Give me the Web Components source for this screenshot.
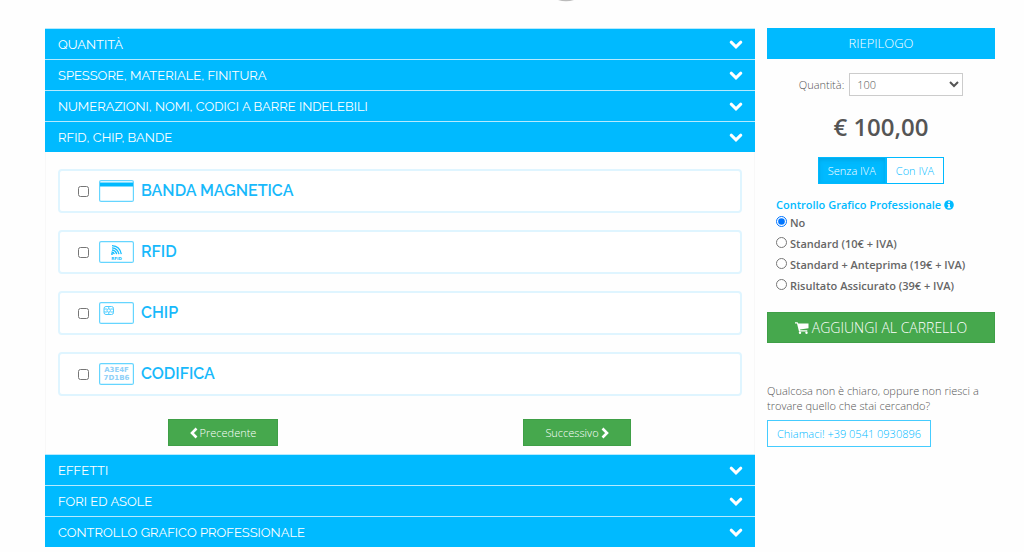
<!DOCTYPE html>
<html lang="it">
<head>
<meta charset="utf-8">
<meta name="viewport" content="width=device-width, initial-scale=1">
<title>Configuratore tessere</title>
<style>
  :root { --sky: #00baff; --sky-pale: #dff5ff; --green: #46a84d; --text: #555; }
  body { margin: 0; background: #fefefe; color: var(--text); font: 300 12px/15px "Open Sans", "Noto Sans", sans-serif; }
</style>
</head>
<body>
<card-configurator></card-configurator>

<template id="t-configurator">
  <style>
    :host { display: block; }
    header { height: 28px; }
    header svg { display: block; margin-left: 54%; }
    .layout { display: grid; grid-template-columns: minmax(0, 1fr) 228px; gap: 12px; align-items: start; padding: 0 29px 4px 45px; }
    .panel { border: solid #f8f8f8; border-width: 0 1px; padding: 17px 12px 8px; }
    .options { display: grid; gap: 17px; }
    nav { display: grid; grid-template-columns: 1fr 1fr; justify-items: center; margin: 23px -12px 0; }
  </style>
  <header><svg width="28" height="3" viewBox="0 0 28 3" aria-hidden="true"><path d="M5 0Q13 2.6 21 0Z" fill="#bbb"/></svg></header>
  <div class="layout">
    <main>
      <step-header>QUANTITÀ</step-header>
      <step-header>SPESSORE, MATERIALE, FINITURA</step-header>
      <step-header>NUMERAZIONI, NOMI, CODICI A BARRE INDELEBILI</step-header>
      <step-header>RFID, CHIP, BANDE</step-header>
      <div class="panel">
        <div class="options">
          <card-option label="BANDA MAGNETICA">
            <svg width="35" height="22" viewBox="0 0 35 22" aria-hidden="true"><rect x=".6" y=".6" width="33.8" height="20.8" rx="1.5" fill="#fff" stroke="#65d5ff" stroke-width="1.2"/><path d="M1 2.5h33v4H1z" fill="#00baff"/></svg>
          </card-option>
          <card-option label="RFID">
            <svg width="35" height="22" viewBox="0 0 35 22" aria-hidden="true"><rect x=".6" y=".6" width="33.8" height="20.8" rx="1.5" fill="#fff" stroke="#65d5ff" stroke-width="1.2"/><g fill="none" stroke="#18beff" stroke-width="1.3"><path d="M13 4.6Q21 5 22.3 13.2M13 6.8Q18.8 7.200 20 13.200M13 9Q16.800 9.400 17.700 13.200M12.500 11Q14.800 11.200 15.300 13.200"/></g><circle cx="13" cy="13" r="1" fill="#18beff"/><text x="17.500" y="18.500" text-anchor="middle" font-family="DejaVu Sans" font-weight="700" font-size="4" fill="#18beff">RFID</text></svg>
          </card-option>
          <card-option label="CHIP">
            <svg width="35" height="22" viewBox="0 0 35 22" aria-hidden="true"><rect x=".6" y=".6" width="33.8" height="20.8" rx="1.5" fill="#fff" stroke="#65d5ff" stroke-width="1.2"/><g fill="none" stroke="#4fcdff" stroke-width="1"><rect x="5" y="4.500" width="9.500" height="8" rx="2"/><circle cx="9.750" cy="8.500" r="1.700"/><path d="M5 7h3M5 10h3M11.500 7h3M11.500 10h3M9.750 4.500v2.300M9.750 10.200v2.300"/></g></svg>
          </card-option>
          <card-option label="CODIFICA">
            <svg width="35" height="22" viewBox="0 0 35 22" aria-hidden="true"><rect x=".6" y=".6" width="33.8" height="20.8" rx="1.5" fill="#fff" stroke="#65d5ff" stroke-width="1.2"/><g font-family="DejaVu Sans" font-weight="700" font-size="7" fill="#8fd0f8" text-anchor="middle"><text x="17.500" y="9">A3E4F</text><text x="17.500" y="17">7D1B6</text></g></svg>
          </card-option>
        </div>
        <nav>
          <nav-button dir-icon="prev">Precedente</nav-button>
          <nav-button dir-icon="next">Successivo</nav-button>
        </nav>
      </div>
      <step-header>EFFETTI</step-header>
      <step-header>FORI ED ASOLE</step-header>
      <step-header>CONTROLLO GRAFICO PROFESSIONALE</step-header>
    </main>
    <order-summary></order-summary>
  </div>
</template>

<template id="t-step">
  <style>
    :host { display: block; border-top: 1px solid #b5eaff; }
    button { display: flex; align-items: center; justify-content: space-between; width: 100%; height: 30px; margin: 0; padding: 2px 12px 0 13px; border: 0; border-radius: 0; background: var(--sky); color: #fff; font: 400 13px/20px Raleway, Lato, sans-serif; text-align: left; cursor: pointer; }
    svg { flex: none; }
  </style>
  <button type="button"><span><slot></slot></span><svg width="14" height="10" viewBox="0 0 14 10" aria-hidden="true"><path d="M2.200 2.200l4.800 4.600 4.800-4.600" fill="none" stroke="#fff" stroke-width="3" stroke-linecap="round"/></svg></button>
</template>

<template id="t-option">
  <style>
    :host { display: block; }
    label { display: flex; align-items: center; box-sizing: border-box; height: 44px; padding: 0 18px; border: 2px solid var(--sky-pale); border-radius: 4px; background: #fff; color: #18b9fb; font: 600 16px/20px Raleway, "Open Sans", sans-serif; cursor: pointer; }
    input { width: 11px; height: 11px; margin: 0 10px 0 0; flex: none; }
    .icon { display: flex; margin-right: 7px; }
  </style>
  <label><input type="checkbox"><span class="icon"><slot></slot></span><span class="name"></span></label>
</template>

<template id="t-nav">
  <style>
    :host { display: block; }
    button { display: flex; align-items: center; gap: 2px; height: 27px; margin: 0; padding: 0 21px; border: 1px solid #3f9f47; border-radius: 0; background: var(--green); color: #fff; font: 300 11px/15px "Open Sans", sans-serif; cursor: pointer; }
    :host([dir-icon="next"]) button { flex-direction: row-reverse; }
    :host([dir-icon="next"]) svg { transform: scaleX(-1); }
  </style>
  <button type="button"><svg width="8" height="12" viewBox="0 0 8 12" aria-hidden="true"><path d="M6.500 1.500L2 6l4.500 4.500" fill="none" stroke="#fff" stroke-width="2.600"/></svg><span><slot></slot></span></button>
</template>

<template id="t-summary">
  <style>
    :host { display: block; }
    h2 { margin: 0; background: var(--sky); color: #fff; font: 300 13px/31px "Open Sans", sans-serif; text-align: center; }
    .qty { display: flex; justify-content: center; align-items: center; gap: 5px; margin-top: 14px; font-size: 11px; }
    select { width: 114px; height: 23px; margin: 0; padding: 0 3px; border: 1px solid #ccc; border-radius: 0; background: #fff; color: var(--text); font: 300 11px/15px "Open Sans", sans-serif; }
    .price { margin: 15px 0; text-align: center; font: 600 24px/31px "Open Sans", sans-serif; color: #555; }
    .vat { display: flex; justify-content: center; }
    .vat button { height: 27px; margin: 0; padding: 0 9px; border: 1px solid var(--sky); border-radius: 0; background: #fff; color: var(--sky); font: 300 11px/15px "Open Sans", sans-serif; cursor: pointer; }
    .vat button[aria-pressed="true"] { background: var(--sky); color: #fff; box-shadow: inset 0 2px 4px #0092cc80; }
    fieldset { margin: 13px 0 0; padding: 0 0 0 9px; border: 0; min-width: 0; font: 600 11px/15px "Open Sans", sans-serif; color: #666; }
    legend { display: flex; align-items: center; gap: 3px; height: 15px; padding: 0; color: #00baff; }
    fieldset label { display: flex; align-items: center; gap: 3px; height: 21px; }
    fieldset input { width: 11px; height: 11px; margin: 0 0 2px; }
    .cart { display: flex; align-items: center; justify-content: center; gap: 3px; width: 100%; height: 31px; margin: 16px 0 0; padding: 0; border: 1px solid #3f9f47; border-radius: 0; background: var(--green); color: #fff; font: 300 14px/20px "Open Sans", sans-serif; cursor: pointer; }
    p { margin: 40px 0 7px; font-size: 11px; line-height: 15px; }
    .call { display: inline-flex; align-items: center; box-sizing: border-box; height: 27px; padding: 0 9px; border: 1px solid #45ccff; color: #00baff; font: 300 11px/15px "Open Sans", sans-serif; text-decoration: none; background: #fff; }
  </style>
  <aside>
    <h2>RIEPILOGO</h2>
    <div class="qty"><label for="q">Quantità:</label><select id="q"><option>100</option><option>200</option><option>500</option></select></div>
    <div class="price">€ 100,00</div>
    <div class="vat"><button type="button" aria-pressed="true">Senza IVA</button><button type="button" aria-pressed="false">Con IVA</button></div>
    <fieldset>
      <legend><span>Controllo Grafico Professionale</span><svg width="10" height="10" viewBox="0 0 10 10" aria-hidden="true"><circle cx="5" cy="5" r="4.800" fill="#00baff"/><path d="M4.200 1.500h1.700V3H4.200zM3.600 4h2.300v3h.7v1.200H3.500V7h.7V5.100h-.6z" fill="#fff"/></svg></legend>
      <label><input type="radio" name="check" checked><span>No</span></label>
      <label><input type="radio" name="check"><span>Standard (10€ + IVA)</span></label>
      <label><input type="radio" name="check"><span>Standard + Anteprima (19€ + IVA)</span></label>
      <label><input type="radio" name="check"><span>Risultato Assicurato (39€ + IVA)</span></label>
    </fieldset>
    <button type="button" class="cart"><svg width="14" height="12" viewBox="0 0 14 12" aria-hidden="true" fill="#fff"><path d="M0 .3h2.600L3.200 1.500H13.500V6.300L5 7.400l.2.900H12.300v1.200H4L2 1.500H0z"/><circle cx="5" cy="10.800" r="1.200"/><circle cx="11.500" cy="10.800" r="1.200"/></svg><span>AGGIUNGI AL CARRELLO</span></button>
    <p>Qualcosa non è chiaro, oppure non riesci a trovare quello che stai cercando?</p>
    <a class="call" href="tel:+3905410930896">Chiamaci! +39 0541 0930896</a>
  </aside>
</template>

<script>
  class TemplateElement extends HTMLElement {
    constructor() {
      super();
      this.attachShadow({ mode: "open" }).append(document.getElementById(this.constructor.template).content.cloneNode(true));
    }
  }
  class StepHeader extends TemplateElement { static template = "t-step"; }
  class CardOption extends TemplateElement {
    static template = "t-option";
    connectedCallback() { this.shadowRoot.querySelector(".name").textContent = this.getAttribute("label"); }
  }
  class NavButton extends TemplateElement { static template = "t-nav"; }
  class OrderSummary extends TemplateElement {
    static template = "t-summary";
    connectedCallback() {
      const buttons = this.shadowRoot.querySelectorAll(".vat button");
      buttons.forEach(b => b.onclick = () => buttons.forEach(o => o.setAttribute("aria-pressed", o === b)));
    }
  }
  class CardConfigurator extends TemplateElement { static template = "t-configurator"; }
  customElements.define("step-header", StepHeader);
  customElements.define("card-option", CardOption);
  customElements.define("nav-button", NavButton);
  customElements.define("order-summary", OrderSummary);
  customElements.define("card-configurator", CardConfigurator);
</script>
</body>
</html>
